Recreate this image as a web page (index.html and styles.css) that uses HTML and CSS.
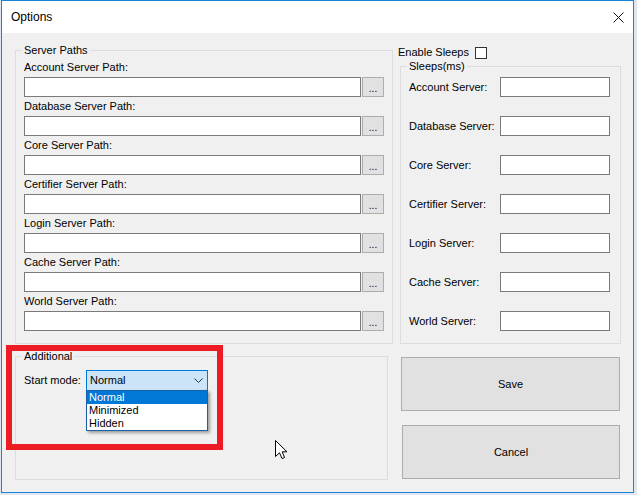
FILE: index.html
```html
<!DOCTYPE html>
<html>
<head>
<meta charset="utf-8">
<title>Options</title>
<link rel="stylesheet" href="styles.css">
</head>
<body>
<div class="window">
  <div class="titlebar">
    <span class="title">Options</span>
    <svg class="close" width="11" height="11" viewBox="0 0 11 11"><path d="M0.5 0.5 L10.5 10.5 M10.5 0.5 L0.5 10.5" stroke="#111" stroke-width="1" fill="none"/></svg>
  </div>
  <div class="content">
    <div class="top-row">
      <fieldset class="group paths">
        <legend>Server Paths</legend>
        <div class="path-row"><label>Account Server Path:</label><div class="path-field"><div class="textbox wide"></div><div class="browse">...</div></div></div>
        <div class="path-row"><label>Database Server Path:</label><div class="path-field"><div class="textbox wide"></div><div class="browse">...</div></div></div>
        <div class="path-row"><label>Core Server Path:</label><div class="path-field"><div class="textbox wide"></div><div class="browse">...</div></div></div>
        <div class="path-row"><label>Certifier Server Path:</label><div class="path-field"><div class="textbox wide"></div><div class="browse">...</div></div></div>
        <div class="path-row"><label>Login Server Path:</label><div class="path-field"><div class="textbox wide"></div><div class="browse">...</div></div></div>
        <div class="path-row"><label>Cache Server Path:</label><div class="path-field"><div class="textbox wide"></div><div class="browse">...</div></div></div>
        <div class="path-row"><label>World Server Path:</label><div class="path-field"><div class="textbox wide"></div><div class="browse">...</div></div></div>
      </fieldset>
      <div class="right-col">
        <div class="enable-row"><span>Enable Sleeps</span><span class="checkbox"></span></div>
        <fieldset class="group sleeps">
          <legend>Sleeps(ms)</legend>
          <div class="sleep-row"><label>Account Server:</label><div class="textbox small"></div></div>
          <div class="sleep-row"><label>Database Server:</label><div class="textbox small"></div></div>
          <div class="sleep-row"><label>Core Server:</label><div class="textbox small"></div></div>
          <div class="sleep-row"><label>Certifier Server:</label><div class="textbox small"></div></div>
          <div class="sleep-row"><label>Login Server:</label><div class="textbox small"></div></div>
          <div class="sleep-row"><label>Cache Server:</label><div class="textbox small"></div></div>
          <div class="sleep-row"><label>World Server:</label><div class="textbox small"></div></div>
        </fieldset>
      </div>
    </div>
    <div class="bottom-row">
      <fieldset class="group additional">
        <legend>Additional</legend>
        <div class="mode-row">
          <label>Start mode:</label>
          <div class="combo">
            <span class="combo-text">Normal</span>
            <svg class="chevron" width="9" height="5" viewBox="0 0 9 5"><path d="M0.5 0.5 L4.5 4.5 L8.5 0.5" stroke="#333" stroke-width="1" fill="none"/></svg>
            <div class="dropdown">
              <div class="item selected">Normal</div>
              <div class="item">Minimized</div>
              <div class="item">Hidden</div>
            </div>
          </div>
        </div>
      </fieldset>
      <div class="buttons">
        <div class="btn save">Save</div>
        <div class="btn cancel">Cancel</div>
      </div>
    </div>
  </div>
  <div class="highlight"></div>
  <svg class="cursor" width="13" height="20" viewBox="0 0 13 20"><path d="M0.5 0.5 L0.5 16.5 L4.5 12.8 L7 18.5 L9.5 17.5 L7.2 11.8 L12 11.8 Z" fill="#fff" stroke="#000" stroke-width="1" stroke-linejoin="miter"/></svg>
</div>
</body>
</html>
```

FILE: styles.css
```css
* { box-sizing: border-box; }
html, body { margin: 0; padding: 0; }
body {
  background: #dfe6f1;
  font-family: "Liberation Sans", Arial, sans-serif;
  font-size: 11px;
  color: #000;
  width: 637px;
  height: 495px;
  overflow: hidden;
}
.window {
  position: relative;
  margin-left: 1px;
  width: 633px;
  height: 493px;
  border: 1px solid #1883d7;
  background: #f0f0f0;
}
.titlebar {
  height: 32px;
  background: #fff;
  display: flex;
  align-items: center;
  justify-content: space-between;
  padding-left: 9px;
  padding-right: 9px;
}
.title { font-size: 12px; line-height: 16px; }
.close { display: block; }
.content {
  padding: 11px 0 0 13px;
}
.top-row {
  display: grid;
  grid-template-columns: 378px 223px;
  column-gap: 5px;
}
.group {
  margin: 0;
  border: 1px solid #dcdcdc;
  min-width: 0;
}
.group legend {
  padding: 0 2px;
  margin-left: -2px;
  line-height: 13px;
  font-size: 11px;
}
.paths {
  padding: 4px 8px 12px 8px;
  display: flex;
  flex-direction: column;
  gap: 3px;
}
.path-row label {
  display: block;
  line-height: 13px;
  height: 13px;
  white-space: nowrap;
}
.path-field {
  display: flex;
  gap: 1px;
  margin-top: 3px;
}
.textbox {
  height: 20px;
  background: #fff;
  border: 1px solid #7a7a7a;
}
.textbox.wide { width: 337px; }
.textbox.small { width: 110px; }
.browse {
  width: 22px;
  height: 20px;
  background: #e1e1e1;
  border: 1px solid #adadad;
  text-align: center;
  line-height: 22px;
  font-size: 10px;
}
.right-col {
  display: flex;
  flex-direction: column;
}
.enable-row {
  height: 16px;
  display: flex;
  align-items: center;
  gap: 6px;
}
.checkbox {
  width: 12px;
  height: 12px;
  border: 1px solid #333;
  background: #fff;
  margin-top: 1px;
}
.sleeps {
  flex: 1;
  margin-left: 2px;
  padding: 4px 10px 12px 8px;
  display: flex;
  flex-direction: column;
  gap: 19px;
}
.sleep-row {
  display: flex;
  align-items: center;
  justify-content: space-between;
  height: 20px;
}
.sleep-row label { line-height: 13px; white-space: nowrap; }
.bottom-row {
  display: grid;
  grid-template-columns: 373px 219px;
  column-gap: 13px;
  margin-top: 6px;
}
.additional {
  height: 130px;
  padding: 7px 8px 0 8px;
}
.mode-row {
  display: flex;
  align-items: center;
  gap: 0;
}
.mode-row label {
  width: 62px;
  line-height: 13px;
}
.combo {
  position: relative;
  width: 122px;
  height: 21px;
  border: 1px solid #0078d7;
  background: #cce4f7;
  display: flex;
  align-items: center;
  justify-content: space-between;
  padding: 0 4px 0 3px;
}
.combo-text { line-height: 13px; }
.chevron { display: block; }
.dropdown {
  position: absolute;
  left: -1px;
  top: 19px;
  width: 122px;
  border: 1px solid #1a5fa8;
  background: #fff;
  box-shadow: 2px 2px 3px rgba(0, 0, 0, 0.35);
  z-index: 2;
}
.item {
  height: 13px;
  line-height: 13px;
  padding-left: 2px;
}
.item.selected {
  background: #0078d7;
  color: #fff;
}
.buttons {
  display: flex;
  flex-direction: column;
  gap: 14px;
  padding-top: 7px;
}
.btn {
  height: 54px;
  background: #e1e1e1;
  border: 1px solid #adadad;
  display: flex;
  align-items: center;
  justify-content: center;
}
.cancel { margin-left: 1px; }
.highlight {
  position: absolute;
  left: 4px;
  top: 344px;
  width: 217px;
  height: 105px;
  border: 6px solid #ed1c24;
  z-index: 3;
}
.cursor {
  position: absolute;
  left: 273px;
  top: 439px;
  z-index: 4;
}
```
